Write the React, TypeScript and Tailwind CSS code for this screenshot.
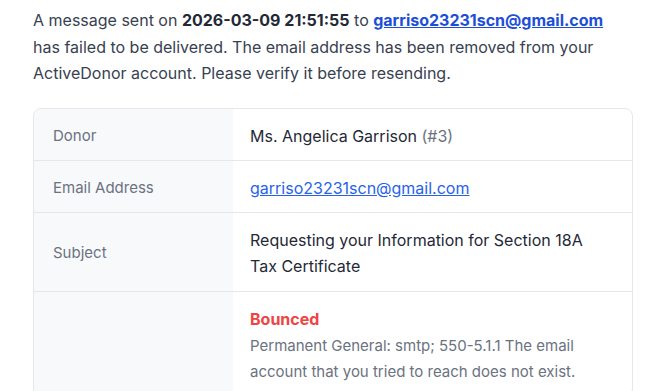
import React from 'react';

const email = 'garriso23231scn@gmail.com';

function Row({ label, children }: { label?: string; children: React.ReactNode }) {
  return (
    <div className="flex border-b border-[#e5e7eb] last:border-b-0">
      <div className="w-[199px] shrink-0 bg-[#f8f9fb] px-[19px] pt-[14px] pb-[11px] text-[15px] leading-[26px] text-[#6b7280] flex items-center">
        {label}
      </div>
      <div className="flex-1 pl-[17px] pr-[40px] pt-[14px] pb-[11px] text-[16px] leading-[26px] text-[#1f2937]">
        {children}
      </div>
    </div>
  );
}

export default function App() {
  return (
    <div className="min-h-screen bg-white px-[33px] pt-[7px] font-['Inter',sans-serif]">
      <p className="text-[16px] leading-[26.5px] text-[#374151] w-[600px]">
        A message sent on <strong className="font-bold text-[#1f2937]">2026-03-09 21:51:55</strong> to{' '}
        <a href="#" className="font-bold text-[#1d4ed8] underline">
          {email}
        </a>{' '}
        has failed to be delivered. The email address has been removed from your ActiveDonor account. Please verify it
        before resending.
      </p>

      <div className="mt-[21px] w-[600px] rounded-lg border border-[#e5e7eb] overflow-hidden">
        <Row label="Donor">
          Ms. Angelica Garrison <span className="text-[#6b7280]">(#3)</span>
        </Row>
        <Row label="Email Address">
          <a href="#" className="text-[#2563eb] underline">
            {email}
          </a>
        </Row>
        <Row label="Subject">
          <div className="leading-[26.5px]">Requesting your Information for Section 18A Tax Certificate</div>
        </Row>
        <Row>
          <div className="font-bold text-[#ef4444]">Bounced</div>
          <div className="mt-[1px] text-[15px] leading-[26px] text-[#6b7280]">
            Permanent General: smtp; 550-5.1.1 The email account that you tried to reach does not exist.
          </div>
        </Row>
      </div>
    </div>
  );
}
